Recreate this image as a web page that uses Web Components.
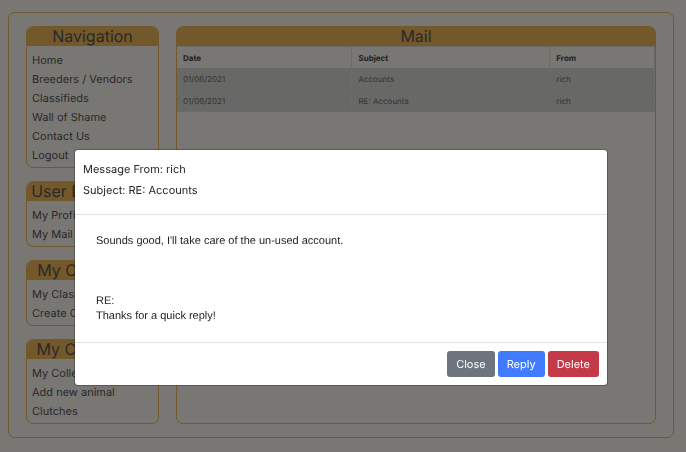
<!DOCTYPE html>
<html lang="en">
<head>
<meta charset="utf-8">
<title>Mail</title>
<style>
  body {
    margin: 12px 12px 15px 8px;
    background: #f0eee9;
    color: #55534f;
    font-family: Inter, "Liberation Sans", sans-serif;
    font-size: 11px;
    text-rendering: geometricPrecision;
    --accent: #e6b056;
  }
</style>
</head>
<body>
<app-frame>
  <side-card slot="side" heading="Navigation">
    <nav-link>Home</nav-link>
    <nav-link>Breeders / Vendors</nav-link>
    <nav-link>Classifieds</nav-link>
    <nav-link>Wall of Shame</nav-link>
    <nav-link>Contact Us</nav-link>
    <nav-link>Logout</nav-link>
  </side-card>
  <side-card slot="side" heading="User Dashboard">
    <nav-link>My Profile</nav-link>
    <nav-link>My Mail</nav-link>
  </side-card>
  <side-card slot="side" heading="My Classifieds">
    <nav-link>My Classifieds</nav-link>
    <nav-link>Create Classified</nav-link>
  </side-card>
  <side-card slot="side" heading="My Collections">
    <nav-link>My Collection</nav-link>
    <nav-link>Add new animal</nav-link>
    <nav-link>Clutches</nav-link>
  </side-card>
  <side-card heading="Mail" flush>
    <mail-table></mail-table>
  </side-card>
</app-frame>

<message-dialog>
  <span slot="from">Message From: rich</span>
  <span slot="subject">Subject: RE: Accounts</span>
  <span>Sounds good, I'll take care of the un-used account.<br><br><br><br>RE:<br>Thanks for a quick reply!</span>
  <action-button slot="actions" kind="secondary">Close</action-button>
  <action-button slot="actions" kind="primary">Reply</action-button>
  <action-button slot="actions" kind="danger">Delete</action-button>
</message-dialog>

<script>
  const define = (name, html, setup) => {
    const template = document.createElement('template');
    template.innerHTML = html;
    customElements.define(name, class extends HTMLElement {
      constructor() {
        super();
        this.attachShadow({ mode: 'open' }).append(template.content.cloneNode(true));
        if (setup) setup(this);
      }
    });
  };

  define('app-frame', `
    <style>
      :host {
        display: grid;
        grid-template-columns: minmax(0, 133fr) minmax(0, 480fr);
        column-gap: 17px;
        padding: 13px 17px 13px;
        border: 1px solid var(--accent);
        border-radius: 7px;
      }
      aside { display: flex; flex-direction: column; gap: 13px; }
      main { display: grid; }
    </style>
    <aside><slot name="side"></slot></aside>
    <main><slot></slot></main>`);

  define('side-card', `
    <style>
      :host {
        display: block;
        overflow: hidden;
        border: 1px solid var(--accent);
        border-radius: 7px;
      }
      h2 {
        margin: 0;
        background: var(--accent);
        font-size: 16px;
        font-weight: 400;
        line-height: 19px;
        text-align: center;
        white-space: nowrap;
      }
      div { padding: 5px 5px 2px; }
      :host([flush]) div { padding: 0; }
    </style>
    <h2></h2>
    <div><slot></slot></div>`,
    host => { host.shadowRoot.querySelector('h2').textContent = host.getAttribute('heading'); });

  define('nav-link', `
    <style>
      :host { display: block; line-height: 19px; white-space: nowrap; }
      a { color: inherit; text-decoration: none; }
    </style>
    <a href="#"><slot></slot></a>`);

  define('mail-table', `
    <style>
      :host { display: block; }
      table {
        width: 100%;
        table-layout: fixed;
        border-collapse: separate;
        border-spacing: 0;
        font-size: 8px;
      }
      th, td {
        box-sizing: border-box;
        height: 22px;
        padding: 0 6px;
        text-align: left;
      }
      th {
        color: #44423f;
        border-top: 1px solid #d6d6d8;
        border-right: 1px solid #d6d6d8;
      }
      td {
        background: #d1d0cc;
        color: #6a6865;
        border-bottom: 1px solid #d6d6d3;
        border-right: 1px solid #d6d6d3;
      }
      col:nth-child(1) { width: 36.7%; }
      col:nth-child(2) { width: 41.4%; }
    </style>
    <table>
      <colgroup><col><col><col></colgroup>
      <thead><tr><th scope="col">Date</th><th scope="col">Subject</th><th scope="col">From</th></tr></thead>
      <tbody>
        <tr><td>01/06/2021</td><td>Accounts</td><td>rich</td></tr>
        <tr><td>01/06/2021</td><td>RE: Accounts</td><td>rich</td></tr>
      </tbody>
    </table>`);

  define('action-button', `
    <style>
      :host { display: block; }
      button {
        display: block;
        padding: 0 9px;
        border: 0;
        border-radius: 3px;
        background: #6c757d;
        color: #fff;
        font: inherit;
        line-height: 26px;
        text-rendering: inherit;
      }
      :host([kind="primary"]) button { background: #407bff; }
      :host([kind="danger"]) button { background: #c43a49; }
    </style>
    <button type="button"><slot></slot></button>`);

  define('message-dialog', `
    <style>
      :host {
        position: fixed;
        inset: 0;
        padding: 150px 4px 0 0;
        background: rgba(0, 0, 0, .5);
        color: #212529;
      }
      dialog {
        position: static;
        box-sizing: border-box;
        width: 78%;
        margin: 0 auto;
        padding: 0;
        border: 0;
        border-radius: 3px;
        box-shadow: 0 0 0 1px rgba(0, 0, 0, .25);
        background: #fff;
        color: inherit;
      }
      header { padding: 9px 8px 13px; border-bottom: 1px solid #dee2e6; }
      p { margin: 0; line-height: 21px; }
      section {
        padding: 19px 21px 18px;
        font-family: "Liberation Sans", sans-serif;
        line-height: 15px;
      }
      footer {
        display: flex;
        justify-content: flex-end;
        gap: 3px;
        padding: 8px;
        border-top: 1px solid #dee2e6;
      }
    </style>
    <dialog open aria-label="Message">
      <header>
        <p><slot name="from"></slot></p>
        <p><slot name="subject"></slot></p>
      </header>
      <section><slot></slot></section>
      <footer><slot name="actions"></slot></footer>
    </dialog>`);
</script>
</body>
</html>
